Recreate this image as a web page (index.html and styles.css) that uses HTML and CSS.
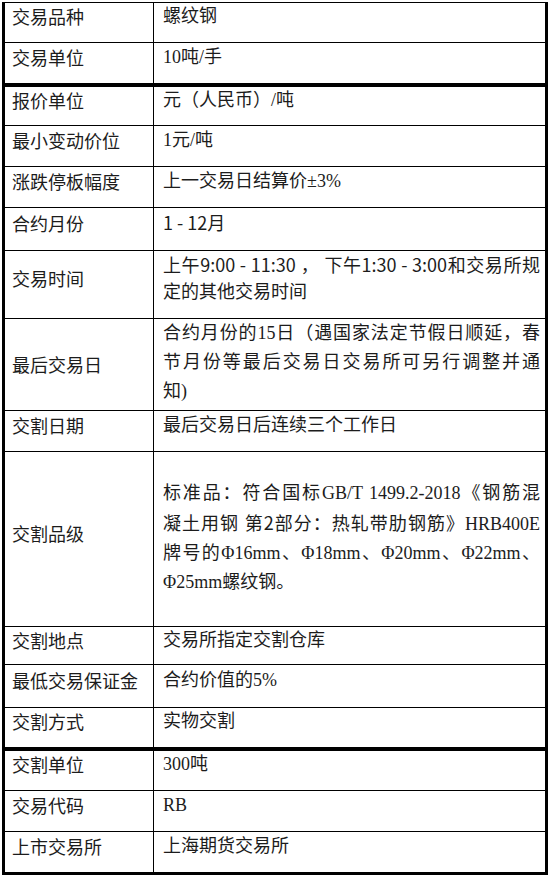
FILE: index.html
```html
<!DOCTYPE html>
<html lang="zh-CN">
<head>
<meta charset="utf-8">
<title>螺纹钢期货合约</title>
<link rel="stylesheet" href="styles.css">
</head>
<body>
<div class="sheet">
  <div class="row h40"><div class="k">交易品种</div><div class="v">螺纹钢</div></div>
  <div class="row h41"><div class="k">交易单位</div><div class="v">10吨/手</div></div>
  <div class="row h42 thick"><div class="k">报价单位</div><div class="v">元（人民币）/吨</div></div>
  <div class="row h41"><div class="k">最小变动价位</div><div class="v">1元/吨</div></div>
  <div class="row h41"><div class="k">涨跌停板幅度</div><div class="v">上一交易日结算价±3%</div></div>
  <div class="row h43"><div class="k">合约月份</div><div class="v"><span class="sans">1 - 12</span>月</div></div>
  <div class="row h68"><div class="k">交易时间</div><div class="v lh26"><span class="ln">上午<span class="sans">9:00 - 11:30</span> ， 下午<span class="sans">1:30 - 3:00</span>和交易所规</span><span class="ln end">定的其他交易时间</span></div></div>
  <div class="row h92"><div class="k">最后交易日</div><div class="v lh29 mb14"><span class="ln">合约月份的15日（遇国家法定节假日顺延，春</span><span class="ln">节月份等最后交易日交易所可另行调整并通</span><span class="ln end">知)</span></div></div>
  <div class="row h41"><div class="k">交割日期</div><div class="v">最后交易日后连续三个工作日</div></div>
  <div class="row h175"><div class="k">交割品级</div><div class="v lh29 mb3"><span class="ln">标准品：符合国标GB/T 1499.2-2018《钢筋混</span><span class="ln">凝土用钢 第<span class="sans">2</span>部分：热轧带肋钢筋》HRB400E</span><span class="ln">牌号的Φ16mm、Φ18mm、Φ20mm、Φ22mm、</span><span class="ln end">Φ25mm螺纹钢。</span></div></div>
  <div class="row h38"><div class="k">交割地点</div><div class="v">交易所指定交割仓库</div></div>
  <div class="row h43"><div class="k">最低交易保证金</div><div class="v">合约价值的5%</div></div>
  <div class="row h40"><div class="k">交割方式</div><div class="v">实物交割</div></div>
  <div class="row h43 thick"><div class="k">交割单位</div><div class="v">300吨</div></div>
  <div class="row h41"><div class="k">交易代码</div><div class="v">RB</div></div>
  <div class="row h40 last"><div class="k">上市交易所</div><div class="v">上海期货交易所</div></div>
</div>
</body>
</html>
```

FILE: styles.css
```css
html, body {
  margin: 0;
  padding: 0;
  background: #ffffff;
}

body {
  font-family: "Liberation Serif", "Noto Sans CJK SC", serif;
  font-size: 18px;
  color: #1c1c1c;
}

.sheet {
  margin: 2px 0 0 2px;
  width: 546px;
  box-sizing: border-box;
  border-top: 1px solid #000;
  border-left: 3px solid #000;
  border-right: 3px solid #000;
  border-bottom: 3px solid #000;
}

.row {
  display: grid;
  grid-template-columns: 149px 1fr;
  border-bottom: 1px solid #000;
  box-sizing: border-box;
}

.row.thick {
  border-top: 3px solid #000;
}

.row.last {
  border-bottom: none;
}

.k {
  display: flex;
  align-items: center;
  box-sizing: border-box;
  padding-left: 7px;
  padding-bottom: 13px;
  line-height: 26px;
  border-right: 1px solid #000;
  font-family: "Noto Sans CJK SC", sans-serif;
}

.v {
  align-self: center;
  box-sizing: border-box;
  padding-left: 9px;
  padding-right: 5px;
  margin-bottom: 13px;
  line-height: 26px;
  white-space: nowrap;
  font-family: "Liberation Serif", "Noto Sans CJK SC", serif;
}

.ln {
  display: block;
  text-align: justify;
  text-align-last: justify;
  text-justify: inter-character;
}

.ln.end {
  text-align: left;
  text-align-last: left;
}

.sans {
  font-family: "Noto Sans CJK SC", sans-serif;
}

.lh26 { line-height: 26px; }
.lh29 { line-height: 29px; }
.mb3 { margin-bottom: 3px; }
.mb14 { margin-bottom: 15px; }

.h38 { height: 38px; }
.h40 { height: 40px; }
.h41 { height: 41px; }
.h42 { height: 42px; }
.h43 { height: 43px; }
.h68 { height: 68px; }
.h92 { height: 92px; }
.h175 { height: 175px; }
```
